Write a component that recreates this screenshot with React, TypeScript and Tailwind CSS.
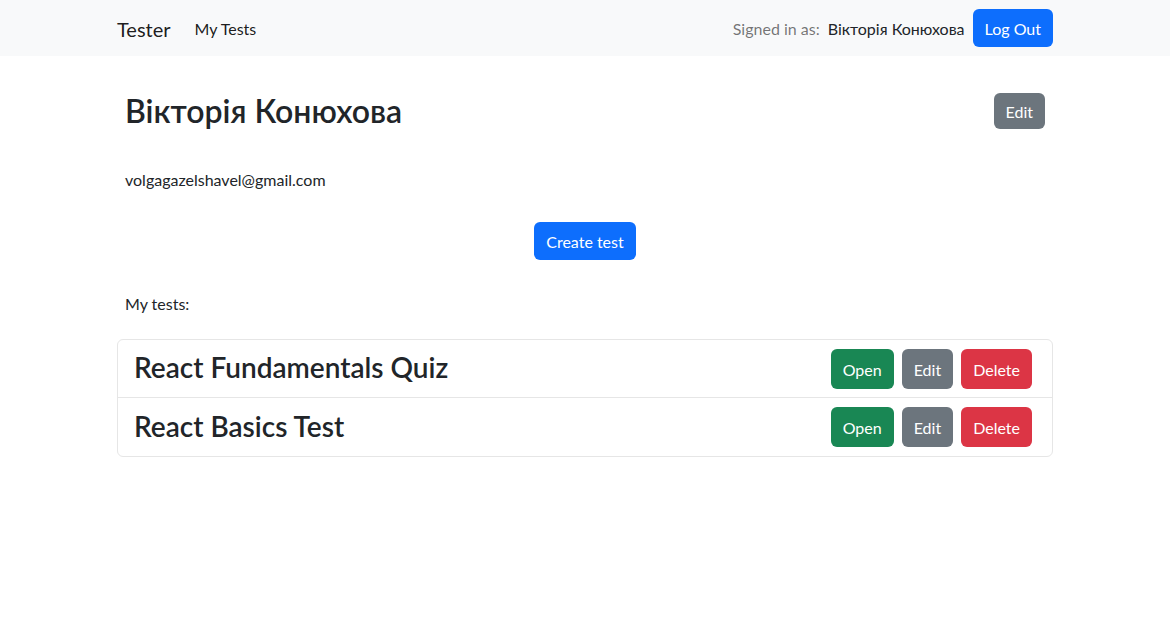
import React from "react";

// список тестів користувача
const tests = [
  { id: 1, title: "React Fundamentals Quiz" },
  { id: 2, title: "React Basics Test" },
];

function Navbar() {
  return (
    <nav className="h-[56px] bg-[#f8f9fa]">
      <div className="mx-auto flex h-full w-[960px] items-center justify-between px-3">
        <div className="flex items-center pt-[2px]">
          <span className="text-[20px] leading-[30px] text-[rgba(0,0,0,0.9)]">Tester</span>
          <span className="ml-[24px] text-[16px] text-[rgba(0,0,0,0.9)]">My Tests</span>
        </div>
        <div className="flex items-center">
          <span className="pt-[2px] text-[16px] text-[rgba(0,0,0,0.55)]">Signed in as:</span>
          <span className="ml-[8px] pt-[2px] text-[16px] text-[#212529]">Вікторія Конюхова</span>
          <button className="ml-[8px] h-[38px] rounded-[6px] bg-[#0d6efd] px-3 pt-[2px] text-[16px] text-white">
            Log Out
          </button>
        </div>
      </div>
    </nav>
  );
}

function TestRow({ title, last }: { title: string; last: boolean }) {
  return (
    <div
      className={
        "flex h-[58px] items-center justify-between pl-4 pr-[16px] " +
        (last ? "" : "border-b border-[#e6e6e6]")
      }
    >
      <h3 className="pb-[3px] text-[28px] font-semibold leading-[34px] text-[#212529]">{title}</h3>
      <div className="flex items-center">
        <button className="mx-1 h-[40px] rounded-[6px] bg-[#198754] px-3 pt-[2px] text-[16px] text-white">Open</button>
        <button className="mx-1 h-[40px] rounded-[6px] bg-[#6c757d] px-3 pt-[2px] text-[16px] text-white">Edit</button>
        <button className="mx-1 h-[40px] rounded-[6px] bg-[#dc3545] px-3 pt-[2px] text-[16px] text-white">Delete</button>
      </div>
    </div>
  );
}

export default function App() {
  return (
    <div className="min-h-[631px] bg-white font-['Lato','Liberation_Sans',sans-serif] text-[#212529]">
      <Navbar />
      <main className="mx-auto w-[960px] px-3">
        <div className="px-2">
          <div className="mt-[36px] flex h-[38px] items-center justify-between">
            <h2 className="text-[32px] font-semibold leading-[38px]">Вікторія Конюхова</h2>
            <button className="h-[36px] rounded-[6px] bg-[#6c757d] px-3 pt-[2px] text-[16px] text-white">Edit</button>
          </div>
          <p className="mt-[38px] text-[16px] leading-[24px]">volgagazelshavel@gmail.com</p>
          <div className="mt-[30px] flex justify-center">
            <button className="h-[38px] rounded-[6px] bg-[#0d6efd] px-3 pt-[2px] text-[16px] text-white">Create test</button>
          </div>
          <p className="mt-[32px] text-[16px] leading-[24px]">My tests:</p>
        </div>
        <div className="mt-[23px] rounded-[6px] border border-[#e6e6e6]">
          {tests.map((t, i) => (
            <TestRow key={t.id} title={t.title} last={i === tests.length - 1} />
          ))}
        </div>
      </main>
    </div>
  );
}
